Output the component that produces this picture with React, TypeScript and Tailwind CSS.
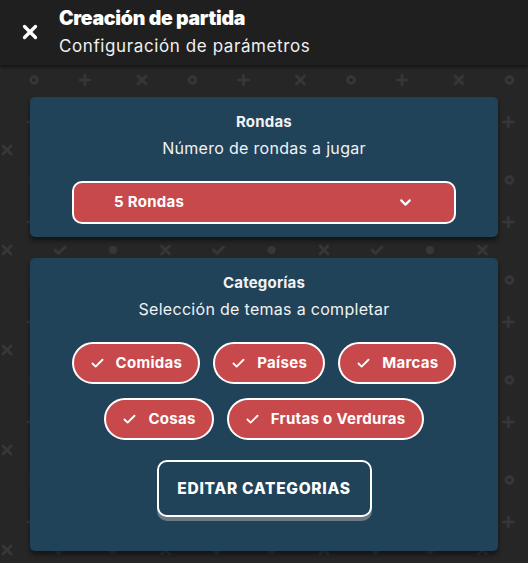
import React from 'react';
import { X, Check, ChevronDown } from 'lucide-react';

const CATEGORY_ROWS = [
  ['Comidas', 'Países', 'Marcas'],
  ['Cosas', 'Frutas o Verduras'],
];

const Pattern: React.FC = () => (
  <svg className="absolute inset-0 w-full h-full" aria-hidden>
    <defs>
      <pattern id="glyphs" width="158.5" height="100" patternUnits="userSpaceOnUse">
        <g stroke="#35373b" strokeWidth="2.6" strokeLinecap="round" fill="none">
          {/* row at 15 */}
          <circle cx="34" cy="15" r="3.4" />
          <path d="M85 10v10M80 15h10" />
          <path d="M138 11l8 8M146 11l-8 8" />
          {/* row at 57 */}
          <path d="M33 52v10M28 57h10" />
          <path d="M82 53l8 8M90 53l-8 8" />
          <circle cx="139" cy="57" r="3.4" />
          {/* row at 85 */}
          <path d="M3 81l8 8M11 81l-8 8" />
          <path d="M55 85l3.5 3.5L65 82" />
          <circle cx="113" cy="85" r="4" fill="#35373b" stroke="none" />
        </g>
      </pattern>
    </defs>
    <rect width="100%" height="100%" fill="url(#glyphs)" />
  </svg>
);

const Card: React.FC<{ title: string; subtitle: string; className?: string; children: React.ReactNode }> = ({
  title,
  subtitle,
  className,
  children,
}) => (
  <section
    className={`relative bg-[#21435a] rounded-[5px] shadow-[0_4px_4px_rgba(0,0,0,0.45)] px-[42px] pt-[15px] flex flex-col items-center text-[#f2f2f2] ${className ?? ''}`}
  >
    <h2 className="text-[15px] leading-[20px] font-bold tracking-[0.2px]">{title}</h2>
    <p className="mt-[4px] text-[16px] leading-[24px] tracking-[0.3px]">{subtitle}</p>
    {children}
  </section>
);

export default function App() {
  return (
    <div className="w-[528px] h-[563px] overflow-hidden bg-[#262626] flex flex-col font-['Inter','Liberation_Sans',sans-serif]">
      <header className="relative z-10 h-[65px] shrink-0 bg-[#1f1f1f] shadow-[0_2px_3px_rgba(0,0,0,0.5)] flex items-center text-white">
        <div className="w-[59px] flex justify-center pl-[1px] -mt-[1px]">
          <X size={22} strokeWidth={3.6} />
        </div>
        <div className="flex flex-col -mt-[1px]">
          <h1 className="text-[19.5px] leading-[24px] font-black tracking-[-0.3px]">Creación de partida</h1>
          <p className="mt-[4px] text-[17px] leading-[24px] tracking-[0.6px] text-[#f0f0f0]">
            Configuración de parámetros
          </p>
        </div>
      </header>

      <main className="relative flex-1">
        <Pattern />
        <div className="relative px-[30px] pt-[32px] flex flex-col gap-[21px]">
          <Card title="Rondas" subtitle="Número de rondas a jugar" className="pb-[13px]">
            <button className="mt-[21px] w-full h-[43px] rounded-[10px] border-2 border-white bg-[#c8494b] flex items-center justify-between pl-[40px] pr-[40px] text-white">
              <span className="text-[15px] font-bold tracking-[0.3px]">5 Rondas</span>
              <ChevronDown size={17} strokeWidth={3} />
            </button>
          </Card>

          <Card title="Categorías" subtitle="Selección de temas a completar" className="pb-[34px]">
            <div className="mt-[21px] flex flex-col items-center gap-[14px]">
              {CATEGORY_ROWS.map((row, i) => (
                <div key={i} className="flex gap-[13px]">
                  {row.map((name) => (
                    <span
                      key={name}
                      className="h-[42px] rounded-full border-2 border-white bg-[#c8494b] flex items-center gap-[11px] pl-[16px] pr-[16px] text-white"
                    >
                      <Check size={15} strokeWidth={3} />
                      <span className="text-[15px] font-bold tracking-[0.3px]">{name}</span>
                    </span>
                  ))}
                </div>
              ))}
            </div>
            <button className="mt-[20px] w-[215px] h-[57px] rounded-[10px] border-2 border-white bg-[#21435a] shadow-[0_4px_0_#6b7984] text-white text-[15.5px] font-extrabold uppercase tracking-[0.7px]">
              Editar categorias
            </button>
          </Card>
        </div>
      </main>
    </div>
  );
}
